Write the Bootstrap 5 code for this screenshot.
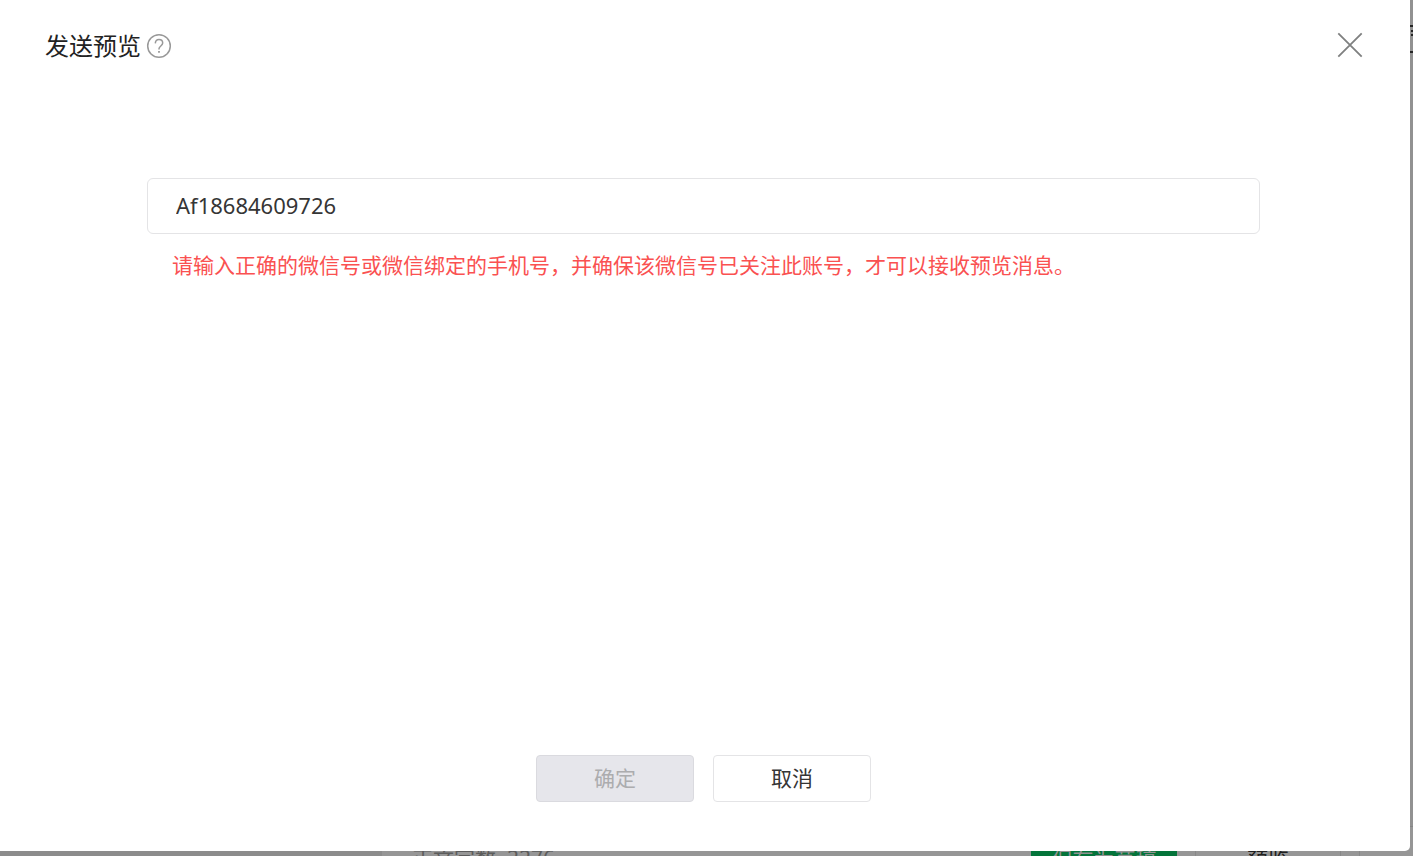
<!DOCTYPE html>
<html lang="zh-CN">
<head>
<meta charset="utf-8">
<meta name="viewport" content="width=device-width, initial-scale=1">
<title>发送预览</title>
<link href="https://cdn.jsdelivr.net/npm/bootstrap@5.3.0/dist/css/bootstrap.min.css" rel="stylesheet">
<style>
  body { font-family: "Noto Sans", "Noto Sans CJK SC", sans-serif; font-size: 21px; line-height: 30px; color: #353535; background: #929292; }
  .editor { background: #929292; }
  .editor-side { width: 382px; background: #8c8c8c; }
  .editor-bar { height: 30px; border-top: 1px solid #858585; background: #969696; padding: 0 53px 0 30px; }
  .editor-bar .btn { width: 146px; padding: 0; }
  .editor-actions { gap: 18px; padding: 8px 18px 0 0; border-right: 1px solid #888; }
  .word-count { color: #5c5c5c; padding-top: 16px; }
  .preview-dialog { margin: 0 3px 5px 0; padding: 28px 3px 49px 0; background: #fff; border-radius: 0 0 5px 0; }
  .dialog-head { padding: 0 44px 0 45px; }
  .dialog-title { font-size: 24px; line-height: 36px; font-weight: 400; color: #222; }
  .dialog-form { padding: 114px 147px 0; }
  .dialog-form .form-control { height: 56px; padding: 0 28px 2px; font-size: 22px; color: #353535; border-color: #e4e4e6; border-radius: 6px; }
  .form-error { color: #fa5151; padding: 16px 25px 0; }
  .btn { font-size: 21px; line-height: 30px; height: 47px; border-radius: 4px; padding: 0 0 2px; }
  .dialog-foot .btn { width: 158px; }
  .dialog-foot { gap: 19px; }
  .btn-plain { --bs-btn-color: #353535; --bs-btn-bg: #fff; --bs-btn-border-color: #e4e4e6; --bs-btn-hover-bg: #f6f6f6; --bs-btn-hover-border-color: #e4e4e6; }
  .btn-muted { --bs-btn-disabled-color: #acacae; --bs-btn-disabled-bg: #e6e6eb; --bs-btn-disabled-border-color: #dadadf; --bs-btn-disabled-opacity: 1; }
  .btn-save { color: #929292; background: #04743a; border: 0; }
  .btn-back { color: #202020; background: #969696; border: 1px solid #888; }
  .edge-tool { top: 24px; right: 0; }
</style>
</head>
<body class="vh-100 overflow-hidden">
<div class="editor position-absolute top-0 start-0 w-100 h-100 d-flex overflow-hidden" aria-hidden="true">
  <div class="editor-side flex-shrink-0"></div>
  <div class="flex-grow-1 d-flex flex-column justify-content-end">
    <div class="editor-bar d-flex align-items-start justify-content-between overflow-hidden">
      <span class="word-count">正文字数&nbsp; 2276</span>
      <div class="editor-actions d-flex">
        <button type="button" class="btn btn-save" tabindex="-1">保存为草稿</button>
        <button type="button" class="btn btn-back" tabindex="-1">预览</button>
      </div>
    </div>
  </div>
  <svg class="edge-tool position-absolute" width="3" height="30" fill="none" stroke="#252525" stroke-width="2"><path d="M0 2h3M0 28h3M1 7h2M1 11h2"/></svg>
</div>

<div class="vh-100 d-flex flex-column position-relative">
  <main class="preview-dialog flex-grow-1 d-flex flex-column" role="dialog" aria-labelledby="dialogTitle">
    <header class="dialog-head d-flex align-items-center justify-content-between">
      <div class="d-flex align-items-center">
        <h1 class="dialog-title mb-0" id="dialogTitle">发送预览</h1>
        <button type="button" class="border-0 bg-transparent p-0 ms-1 d-flex" aria-label="帮助">
          <svg width="28" height="28" viewBox="0 0 28 28" fill="none" stroke="#999" stroke-width="1.5"><circle cx="14" cy="14" r="11.3"/><path d="M10.3 11.4c.1-2.6 1.6-4 3.7-4s3.7 1.5 3.7 3.6c0 2.7-3.7 3.2-3.7 5.8v.6"/><path d="M14 19v1.8" stroke-width="1.8"/></svg>
        </button>
      </div>
      <button type="button" class="border-0 bg-transparent p-0 d-flex" aria-label="关闭">
        <svg width="26" height="28" viewBox="0 0 26 28" fill="none" stroke="#7f8080" stroke-width="1.8"><path d="M1.3 1.3l23.4 23.4M24.7 1.3L1.3 24.7"/></svg>
      </button>
    </header>
    <form class="dialog-form">
      <input type="text" class="form-control" value="Af18684609726" aria-label="微信号" aria-describedby="idError">
      <div class="form-error" id="idError">请输入正确的微信号或微信绑定的手机号，并确保该微信号已关注此账号，才可以接收预览消息。</div>
    </form>
    <footer class="dialog-foot d-flex justify-content-center mt-auto">
      <button type="button" class="btn btn-muted" disabled>确定</button>
      <button type="button" class="btn btn-plain">取消</button>
    </footer>
  </main>
</div>
<script src="https://cdn.jsdelivr.net/npm/bootstrap@5.3.0/dist/js/bootstrap.bundle.min.js"></script>
</body>
</html>
